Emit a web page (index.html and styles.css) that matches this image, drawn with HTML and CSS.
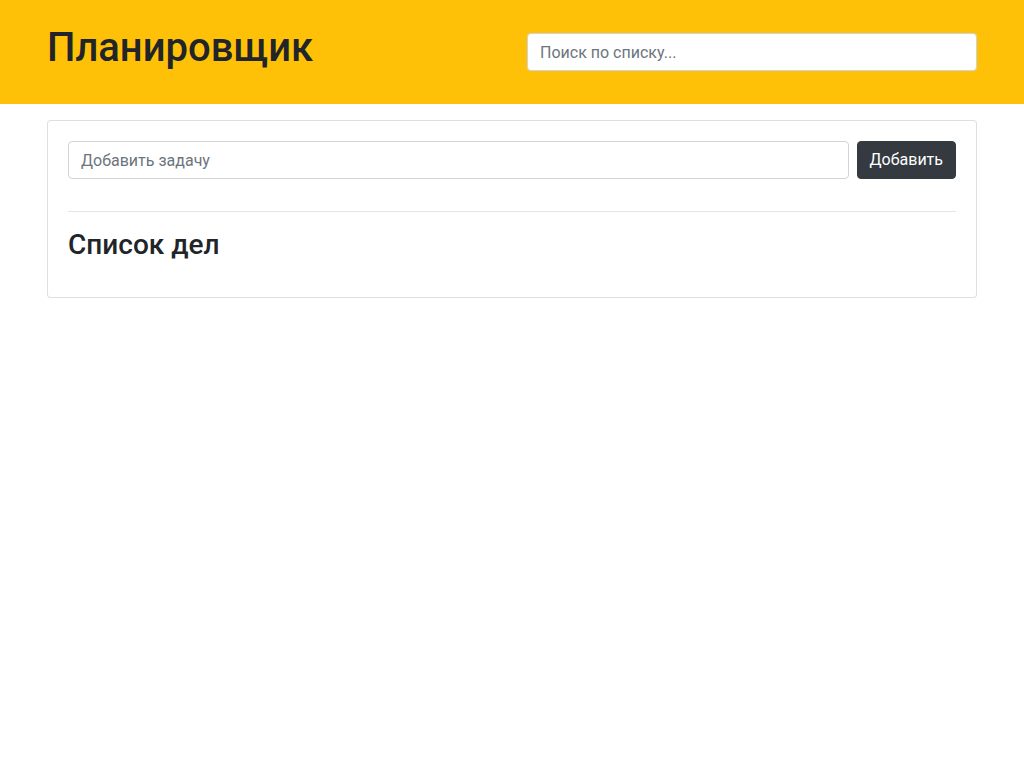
FILE: index.html
```html
<!DOCTYPE html>
<html lang="ru">
<head>
<meta charset="utf-8">
<title>Планировщик</title>
<link rel="stylesheet" href="styles.css">
</head>
<body>
<header class="header">
  <div class="container header-row">
    <div class="col">
      <h1 class="title">Планировщик</h1>
    </div>
    <div class="col">
      <input class="form-control" type="text" placeholder="Поиск по списку...">
    </div>
  </div>
</header>
<main class="container">
  <div class="card">
    <div class="card-body">
      <form class="add-form">
        <input class="form-control grow" type="text" placeholder="Добавить задачу">
        <button class="btn" type="button">Добавить</button>
      </form>
      <hr class="divider">
      <h3 class="list-title">Список дел</h3>
      <ul class="list"></ul>
    </div>
  </div>
</main>
</body>
</html>
```
FILE: styles.css
```css
* { box-sizing: border-box; }
body {
  margin: 0;
  font-family: Roboto, "Liberation Sans", sans-serif;
  font-size: 16px;
  line-height: 1.5;
  color: #212529;
  background: #fff;
}
.container {
  width: 960px;
  margin: 0 auto;
  padding: 0 15px;
}
.header {
  background: #ffc107;
  padding: 24px 0;
}
.header-row {
  display: flex;
  align-items: center;
  gap: 30px;
}
.col { flex: 1 1 0; }
.title {
  margin: 0 0 8px;
  font-size: 40px;
  font-weight: 500;
  line-height: 1.2;
}
.form-control {
  display: block;
  width: 100%;
  height: 38px;
  padding: 6px 12px;
  font-family: inherit;
  font-size: 16px;
  line-height: 1.5;
  color: #495057;
  background: #fff;
  border: 1px solid #ced4da;
  border-radius: 4px;
  outline: none;
}
.form-control::placeholder { color: #6c757d; }
.card {
  margin-top: 16px;
  border: 1px solid rgba(0,0,0,.125);
  border-radius: 4px;
  background: #fff;
}
.card-body { padding: 20px; }
.add-form {
  display: flex;
  gap: 8px;
  margin: 0;
}
.grow { flex: 1 1 auto; width: auto; }
.btn {
  height: 38px;
  padding: 6px 12px;
  font-family: inherit;
  font-size: 16px;
  line-height: 1.5;
  color: #fff;
  background: #343a40;
  border: 1px solid #343a40;
  border-radius: 4px;
}
.divider {
  margin: 32px 0 16px;
  border: 0;
  border-top: 1px solid rgba(0,0,0,.1);
}
.list-title {
  margin: 0 0 8px;
  font-size: 28px;
  font-weight: 500;
  line-height: 1.2;
}
.list {
  margin: 0 0 15px;
  padding-left: 40px;
}
```
